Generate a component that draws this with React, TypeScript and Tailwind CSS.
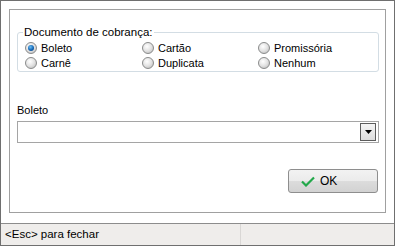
import React, { useState } from 'react';

const Radio = ({ checked }: { checked: boolean }) => (
  <span className="w-[12px] h-[12px] shrink-0 rounded-full border border-[#8a8b8b] bg-[radial-gradient(circle_at_40%_35%,#ffffff_0%,#e2e2e2_50%,#b4b4b4_100%)] flex items-center justify-center">
    {checked && (
      <span className="w-[6px] h-[6px] rounded-full bg-[radial-gradient(circle_at_40%_35%,#6cc0f5_0%,#1265b5_55%,#0b3b72_100%)]" />
    )}
  </span>
);

const options = ['Boleto', 'Cartão', 'Promissória', 'Carnê', 'Duplicata', 'Nenhum'];

const App: React.FC = () => {
  const [doc, setDoc] = useState('Boleto');

  return (
    <div className="w-[395px] h-[246px] border border-[#6f6f6f] flex flex-col bg-white text-[11px] text-black font-['Liberation_Sans',Arial,sans-serif]">
      <div className="flex-1 pt-[8px] px-[8px] pb-[10px]">
        <div className="h-full border border-[#a0a0a0] pl-[7px] pr-[6px] flex flex-col">
          <fieldset className="mt-[16px] w-[362px] border border-[#d3dde4] rounded-[3px] pl-[7px] pt-[1px] pb-[1px]">
            <legend className="-ml-[2px] px-[1px] leading-[13px] text-[11.5px]">Documento de cobrança:</legend>
            <div className="grid grid-cols-[117px_116px_1fr]">
              {options.map(o => (
                <label key={o} className="h-[15px] flex items-center gap-[4px] cursor-default" onClick={() => setDoc(o)}>
                  <Radio checked={doc === o} />
                  <span className="leading-[14px]">{o}</span>
                </label>
              ))}
            </div>
          </fieldset>

          <div className="mt-[31px] leading-[14px]">{doc}</div>
          <div className="mt-[4px] w-[362px] h-[22px] border border-[#a5a5a5] flex items-center justify-end pr-[2px]">
            <div className="w-[16px] h-[18px] border border-[#5c5c5c] bg-[linear-gradient(#f4f4f4,#dcdcdc)] flex items-center justify-center">
              <svg width="7" height="4" viewBox="0 0 7 4"><path d="M0 0h7L3.5 4z" fill="#000" /></svg>
            </div>
          </div>

          <button className="mt-[26px] self-end mr-[1px] w-[90px] h-[24px] rounded-[3px] border border-[#8e8e8e] bg-[linear-gradient(#f2f2f2_0%,#ebebeb_50%,#dcdcdc_51%,#d2d2d2_100%)] flex items-center pl-[12px] gap-[5px] text-[12px]">
            <svg width="14" height="11" viewBox="0 0 14 11">
              <path d="M1 5.5l4 4L13 1.5" fill="none" stroke="#22a84a" strokeWidth="2.2" />
            </svg>
            <span className="leading-[14px]">OK</span>
          </button>
        </div>
      </div>
      <div className="h-[22px] border-t border-[#8c8c8c] bg-[#efedeb] flex text-[11.5px]">
        <div className="w-[240px] border-r border-[#d9d7d5] pl-[4px] flex items-center">&lt;Esc&gt; para fechar</div>
      </div>
    </div>
  );
};

export default App;
